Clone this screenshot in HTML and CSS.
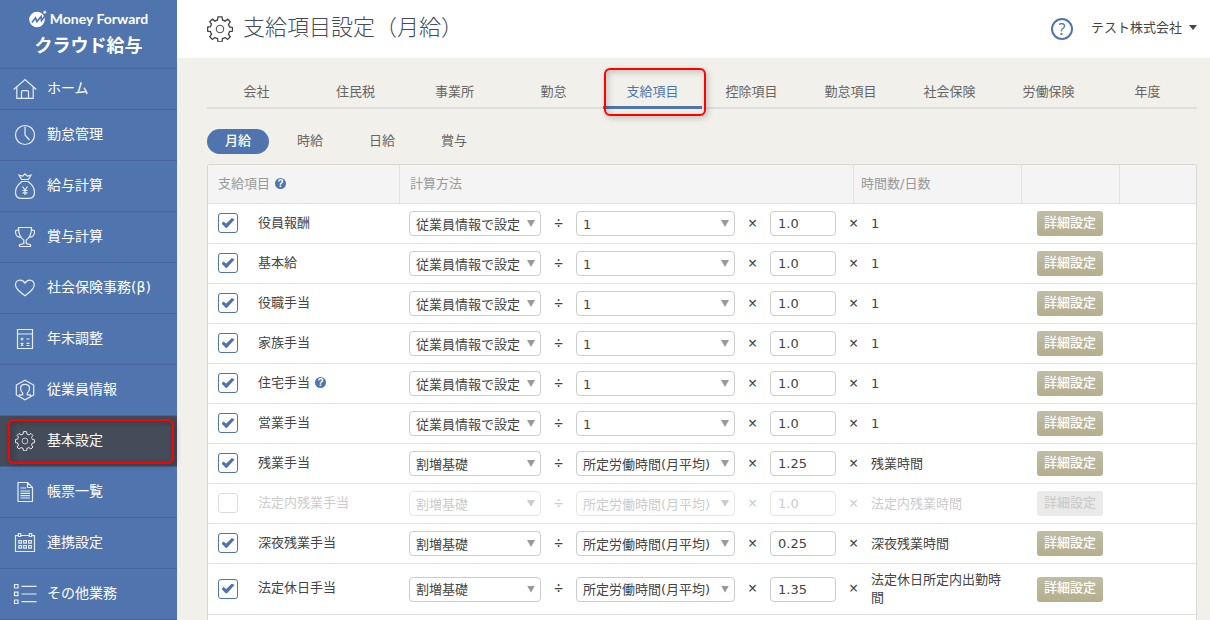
FILE: index.html
```html
<!DOCTYPE html>
<html lang="ja">
<head>
<meta charset="utf-8">
<meta name="viewport" content="width=device-width, initial-scale=1">
<title>支給項目設定（月給）</title>
<link rel="stylesheet" href="styles.css">
</head>
<body>
<svg class="defs" width="0" height="0" aria-hidden="true">
  <symbol id="gear" viewBox="0 0 26 26">
    <path d="M10.500 4 11 .8h4l.5 3.200q1.500.4 2.600 1.100l2.600-1.900 2.600 2.600-1.900 2.600q.8 1.200 1.100 2.600l3 .5v3.600l-3 .5q-.3 1.400-1.100 2.700l1.900 2.500-2.600 2.600-2.600-1.900q-1.100.7-2.600 1.100l-.5 3.200h-4l-.5-3.200q-1.500-.4-2.600-1.100l-2.600 1.900-2.600-2.600 1.900-2.600Q3.800 17 3.500 15.600l-2.900-.5v-4l2.900-.5q.3-1.400 1.100-2.600L2.700 5.800l2.600-2.600 2.600 1.900Q9 4.400 10.500 4z" fill="none" stroke="currentColor" stroke-width="1.300"/>
    <circle cx="13" cy="13" r="3.800" fill="none" stroke="currentColor" stroke-width="1"/>
  </symbol>
</svg>
<div class="app">
  <nav class="sidebar">
    <a class="brand" href="#">
      <span class="brand-top">
        <svg class="brand-mark" viewBox="0 0 18 18"><circle cx="8" cy="9.500" r="7.800" fill="#fff"/><path d="M3 12.500 6.500 8l1.500 3.500L12 6.500l.5 4L17 4.500" fill="none" stroke="#5075ae" stroke-width="1.700"/><circle cx="15.700" cy="2.300" r="1.700" fill="#fff" stroke="#5075ae" stroke-width=".6"/></svg>
        <span>Money Forward</span>
      </span>
      <span class="brand-sub">クラウド給与</span>
    </a>
    <a class="nav-item nav-home" href="#"><svg class="nav-icon" viewBox="0 0 24 24"><path d="M.7 12.500 12 2.500l11.300 10M3.800 10v11.300h16.400V10M8.500 21v-6.300q0-1 1-1h5q1 0 1 1V21"/></svg><span>ホーム</span></a>
    <a class="nav-item" href="#"><svg class="nav-icon" viewBox="0 0 24 24"><circle cx="12" cy="12" r="9.500"/><path d="M12 3.500V12l4.500 5"/></svg><span>勤怠管理</span></a>
    <a class="nav-item" href="#"><svg class="nav-icon tall" viewBox="0 0 24 26"><path d="M8.700 6.500 6 2.200l3.700 1L12 .8l2.300 2.400L18 2.200l-2.700 4.300zM8.300 8.500h7.400M8.700 8.700C5 11.500 2.500 15 2.500 19c0 4.500 2 6.300 5 6.300h9c3 0 5-1.800 5-6.300 0-4-2.500-7.500-6.200-10.300M9.500 13.500l2.500 3.500 2.500-3.500M12 17v5M9.500 17.500h5M9.500 19.800h5"/></svg><span>給与計算</span></a>
    <a class="nav-item" href="#"><svg class="nav-icon" viewBox="0 0 24 24"><path d="M5.500 2.500h13c0 6-1.500 10-5.300 12.500v3.500l4.300 1.200v1.800h-11v-1.800l4.300-1.200V15C7 12.500 5.500 8.500 5.500 2.500zM5.600 5.200C3.500 4.700 2.500 5.500 2.500 7c0 3 2 5.200 5 5.200M18.400 5.200c2.100-.5 3.100.3 3.100 1.800 0 3-2 5.200-5 5.200"/></svg><span>賞与計算</span></a>
    <a class="nav-item" href="#"><svg class="nav-icon" viewBox="0 0 24 24"><path d="M12 7.200C10.500 4.800 8.800 4.200 7 4.200c-2.700 0-4.500 2-4.500 4.600 0 3 2 5.200 9.500 11 7.500-5.800 9.200-8 9.200-11 0-2.600-1.700-4.600-4.400-4.600-1.800 0-3.300.6-4.800 3z"/></svg><span>社会保険事務(β)</span></a>
    <a class="nav-item" href="#"><svg class="nav-icon" viewBox="0 0 24 24"><path d="M4.500 2.500h15v19h-15zM4.500 7h15M7.500 12h3M9 10.500v3M13.500 12h3M7.800 16l2.500 2.500M10.300 16l-2.500 2.500M13.500 16.300h3M13.500 18.500h3"/></svg><span>年末調整</span></a>
    <a class="nav-item" href="#"><svg class="nav-icon" viewBox="0 0 24 24"><path d="M12 2.300 20.700 7v10L12 21.700 3.300 17V7zM6.500 18.300v-1.500h3.200V15C8 13.500 7.500 12 7.500 10.300c0-2.500 2-4 4.500-4s4.500 1.500 4.500 4c0 1.700-.5 3.200-2.200 4.700v1.800h3.200v1.500"/></svg><span>従業員情報</span></a>
    <a class="nav-item active marked" href="#" aria-current="page"><svg class="nav-icon gear"><use href="#gear"/></svg><span>基本設定</span></a>
    <a class="nav-item" href="#"><svg class="nav-icon" viewBox="0 0 24 24"><path d="M5 2.500h9.500l5 5v14H5zM14.500 2.500v5h5M7.500 8H13M7.500 11h9.500M7.500 13.300h9.500M7.500 15.700h9.500M7.500 18h9.500"/></svg><span>帳票一覧</span></a>
    <a class="nav-item" href="#"><svg class="nav-icon" viewBox="0 0 24 24"><path d="M5 4.500H2.500v16h19v-16H19M8 4.500h8M5.300 2.500h2.400v3H5.300zM16.300 2.500h2.400v3h-2.400zM5.800 9.500h2.700v2.700H5.800zM10.700 9.500h2.700v2.700h-2.700zM15.600 9.500h2.700v2.700h-2.700zM5.800 14.500h2.700v2.700H5.800zM10.700 14.500h2.700v2.700h-2.700zM15.600 14.500h2.700v2.700h-2.700z"/></svg><span>連携設定</span></a>
    <a class="nav-item" href="#"><svg class="nav-icon" viewBox="0 0 24 24"><path d="M1.500 2.500h3.500v3.500H1.500zM1.500 10.200h3.500v3.500H1.500zM1.500 18h3.500v3.500H1.500zM8.500 4.300h15M8.500 12h15M8.500 19.700h15"/></svg><span>その他業務</span></a>
  </nav>

  <div class="page">
    <header class="topbar">
      <svg class="title-icon"><use href="#gear"/></svg>
      <h1>支給項目設定（月給）</h1>
      <a class="help" href="#" aria-label="ヘルプ">?</a>
      <button class="company" type="button">テスト株式会社<span class="caret"></span></button>
    </header>

    <main>
      <nav class="tabs">
        <a href="#">会社</a><a href="#">住民税</a><a href="#">事業所</a><a href="#">勤怠</a><a class="current marked" href="#" aria-current="page">支給項目</a><a href="#">控除項目</a><a href="#">勤怠項目</a><a href="#">社会保険</a><a href="#">労働保険</a><a href="#">年度</a>
      </nav>
      <nav class="pills">
        <a class="current" href="#">月給</a><a href="#">時給</a><a href="#">日給</a><a href="#">賞与</a>
      </nav>

      <div class="card">
        <table>
          <colgroup><col class="c-item"><col class="c-method"><col class="c-hours"><col class="c-detail"><col class="c-rest"></colgroup>
          <thead>
            <tr><th>支給項目<span class="tip">?</span></th><th>計算方法</th><th>時間数/日数</th><th></th><th></th></tr>
          </thead>
          <tbody>
            <tr>
              <td><label class="item"><input type="checkbox" checked><span>役員報酬</span></label></td>
              <td colspan="2"><div class="formula"><span class="pick base"><select aria-label="基礎"><option>従業員情報で設定</option></select></span><span class="op">÷</span><span class="pick divisor"><select aria-label="除数"><option>1</option></select></span><span class="op">×</span><input class="rate" type="text" value="1.0" aria-label="倍率"><span class="op">×</span><span class="hours">1</span></div></td>
              <td class="detail"><button type="button">詳細設定</button></td><td></td>
            </tr>
            <tr>
              <td><label class="item"><input type="checkbox" checked><span>基本給</span></label></td>
              <td colspan="2"><div class="formula"><span class="pick base"><select aria-label="基礎"><option>従業員情報で設定</option></select></span><span class="op">÷</span><span class="pick divisor"><select aria-label="除数"><option>1</option></select></span><span class="op">×</span><input class="rate" type="text" value="1.0" aria-label="倍率"><span class="op">×</span><span class="hours">1</span></div></td>
              <td class="detail"><button type="button">詳細設定</button></td><td></td>
            </tr>
            <tr>
              <td><label class="item"><input type="checkbox" checked><span>役職手当</span></label></td>
              <td colspan="2"><div class="formula"><span class="pick base"><select aria-label="基礎"><option>従業員情報で設定</option></select></span><span class="op">÷</span><span class="pick divisor"><select aria-label="除数"><option>1</option></select></span><span class="op">×</span><input class="rate" type="text" value="1.0" aria-label="倍率"><span class="op">×</span><span class="hours">1</span></div></td>
              <td class="detail"><button type="button">詳細設定</button></td><td></td>
            </tr>
            <tr>
              <td><label class="item"><input type="checkbox" checked><span>家族手当</span></label></td>
              <td colspan="2"><div class="formula"><span class="pick base"><select aria-label="基礎"><option>従業員情報で設定</option></select></span><span class="op">÷</span><span class="pick divisor"><select aria-label="除数"><option>1</option></select></span><span class="op">×</span><input class="rate" type="text" value="1.0" aria-label="倍率"><span class="op">×</span><span class="hours">1</span></div></td>
              <td class="detail"><button type="button">詳細設定</button></td><td></td>
            </tr>
            <tr>
              <td><label class="item"><input type="checkbox" checked><span>住宅手当<span class="tip">?</span></span></label></td>
              <td colspan="2"><div class="formula"><span class="pick base"><select aria-label="基礎"><option>従業員情報で設定</option></select></span><span class="op">÷</span><span class="pick divisor"><select aria-label="除数"><option>1</option></select></span><span class="op">×</span><input class="rate" type="text" value="1.0" aria-label="倍率"><span class="op">×</span><span class="hours">1</span></div></td>
              <td class="detail"><button type="button">詳細設定</button></td><td></td>
            </tr>
            <tr>
              <td><label class="item"><input type="checkbox" checked><span>営業手当</span></label></td>
              <td colspan="2"><div class="formula"><span class="pick base"><select aria-label="基礎"><option>従業員情報で設定</option></select></span><span class="op">÷</span><span class="pick divisor"><select aria-label="除数"><option>1</option></select></span><span class="op">×</span><input class="rate" type="text" value="1.0" aria-label="倍率"><span class="op">×</span><span class="hours">1</span></div></td>
              <td class="detail"><button type="button">詳細設定</button></td><td></td>
            </tr>
            <tr>
              <td><label class="item"><input type="checkbox" checked><span>残業手当</span></label></td>
              <td colspan="2"><div class="formula"><span class="pick base"><select aria-label="基礎"><option>割増基礎</option></select></span><span class="op">÷</span><span class="pick divisor"><select aria-label="除数"><option>所定労働時間(月平均)</option></select></span><span class="op">×</span><input class="rate" type="text" value="1.25" aria-label="倍率"><span class="op">×</span><span class="hours">残業時間</span></div></td>
              <td class="detail"><button type="button">詳細設定</button></td><td></td>
            </tr>
            <tr class="off">
              <td><label class="item"><input type="checkbox"><span>法定内残業手当</span></label></td>
              <td colspan="2"><div class="formula"><span class="pick base"><select aria-label="基礎" disabled><option>割増基礎</option></select></span><span class="op">÷</span><span class="pick divisor"><select aria-label="除数" disabled><option>所定労働時間(月平均)</option></select></span><span class="op">×</span><input class="rate" type="text" value="1.0" aria-label="倍率" disabled><span class="op">×</span><span class="hours">法定内残業時間</span></div></td>
              <td class="detail"><button type="button" disabled>詳細設定</button></td><td></td>
            </tr>
            <tr>
              <td><label class="item"><input type="checkbox" checked><span>深夜残業手当</span></label></td>
              <td colspan="2"><div class="formula"><span class="pick base"><select aria-label="基礎"><option>割増基礎</option></select></span><span class="op">÷</span><span class="pick divisor"><select aria-label="除数"><option>所定労働時間(月平均)</option></select></span><span class="op">×</span><input class="rate" type="text" value="0.25" aria-label="倍率"><span class="op">×</span><span class="hours">深夜残業時間</span></div></td>
              <td class="detail"><button type="button">詳細設定</button></td><td></td>
            </tr>
            <tr>
              <td><label class="item"><input type="checkbox" checked><span>法定休日手当</span></label></td>
              <td colspan="2"><div class="formula"><span class="pick base"><select aria-label="基礎"><option>割増基礎</option></select></span><span class="op">÷</span><span class="pick divisor"><select aria-label="除数"><option>所定労働時間(月平均)</option></select></span><span class="op">×</span><input class="rate" type="text" value="1.35" aria-label="倍率"><span class="op">×</span><span class="hours">法定休日所定内出勤時間</span></div></td>
              <td class="detail"><button type="button">詳細設定</button></td><td></td>
            </tr>
          </tbody>
        </table>
      </div>
    </main>
  </div>
</div>
</body>
</html>
```

FILE: styles.css
```css
* { box-sizing: border-box; }

body {
  margin: 0;
  background: #f1f0eb;
  color: #444;
  font: 13px/18px "DejaVu Sans", "Noto Sans CJK JP", sans-serif;
}

a { color: inherit; text-decoration: none; }
button, input, select { margin: 0; font: inherit; color: inherit; }
.defs { position: absolute; }

.app { display: flex; min-height: 100vh; }

/* Sidebar */
.sidebar {
  flex: none;
  width: 177px;
  background: #5075ae;
  color: #fff;
  font-size: 14px;
}
.brand {
  display: flex;
  flex-direction: column;
  align-items: center;
  height: 69px;
  padding-top: 9px;
  border-bottom: 1px solid #45669f;
}
.brand-top {
  display: flex;
  align-items: center;
  gap: 3px;
  font: bold 14px/20px Lato, sans-serif;
}
.brand-mark { width: 18px; height: 18px; }
.brand-sub {
  font: bold 18px/30px "Noto Sans CJK JP", sans-serif;
}
.nav-item {
  position: relative;
  display: flex;
  align-items: center;
  gap: 10px;
  height: 51px;
  padding-left: 13px;
  border-bottom: 1px solid #45669f;
}
.nav-item span { padding-bottom: 2px; }
.nav-home { height: 41px; }
.nav-icon {
  flex: none;
  width: 24px;
  height: 24px;
  fill: none;
  stroke: #e8edf5;
  stroke-width: 1.2;
}
.nav-icon.tall { height: 26px; }
.nav-icon.gear { width: 20px; height: 20px; margin: 0 2px; color: #e8edf5; }
.nav-item.active { background: #444b59; border-color: #45608c; }

/* Highlight frames laid over the active entries */
.marked::after {
  content: "";
  position: absolute;
  z-index: 1;
  border: 2px solid #f00;
  border-radius: 6px;
  box-shadow: 2px 2px 6px rgba(0, 0, 0, .2), inset 2px 2px 6px rgba(0, 0, 0, .2);
  pointer-events: none;
}
.nav-item.marked::after { inset: 3px 3px 2px 8px; }
.tabs .marked::after { inset: -6px -4px -10px 1px; }

/* Header */
.page { flex: 1; min-width: 0; display: flex; flex-direction: column; }
.topbar {
  display: flex;
  align-items: center;
  height: 58px;
  padding: 0 13px 0 30px;
  background: #fff;
}
.title-icon { width: 26px; height: 26px; color: #444; }
h1 {
  flex: 1;
  margin: 0 0 0 10px;
  padding-bottom: 2px;
  color: #444b59;
  font-size: 22px;
  font-weight: 300;
  line-height: 32px;
}
.help {
  width: 22px;
  height: 22px;
  border: 2px solid #5075ae;
  border-radius: 50%;
  color: #5075ae;
  font: 16px/18px "Noto Sans", sans-serif;
  text-align: center;
}
.company {
  display: flex;
  align-items: center;
  gap: 7px;
  margin-left: 18px;
  padding: 0 0 3px;
  border: 0;
  background: none;
}
.caret {
  width: 8px;
  height: 5px;
  background: #444;
  clip-path: polygon(0 0, 100% 0, 50% 100%);
}

main {
  flex: 1;
  display: flex;
  flex-direction: column;
  padding: 16px 13px 0 30px;
}

/* Tabs */
.tabs { display: flex; border-bottom: 2px solid #ddd; }
.tabs a {
  position: relative;
  flex: 1;
  height: 35px;
  margin-bottom: -2px;
  padding-top: 9px;
  color: #666;
  text-align: center;
}
.tabs .current { border-bottom: 3px solid #5075ae; color: #5075ae; }

.pills { display: flex; gap: 10px; padding: 20px 0 10px; }
.pills a {
  padding: 3px 18px 4px;
  border-radius: 13px;
  color: #666;
}
.pills .current { background: #5075ae; color: #fff; font-weight: 500; }

/* Table */
.card {
  flex: 1;
  border: 1px solid #d8d8d8;
  border-bottom: 0;
  border-radius: 3px 3px 0 0;
  background: #fff;
}
table { width: 100%; table-layout: fixed; border-collapse: separate; border-spacing: 0; }
.c-item { width: 191px; }
.c-hours { width: 168px; }
.c-detail { width: 98px; }
.c-rest { width: 77px; }
th {
  height: 39px;
  padding: 0 10px;
  border-bottom: 1px solid #e2e2e2;
  border-left: 1px solid #e2e2e2;
  background: #f4f4f4;
  color: #999;
  font-weight: 400;
  text-align: left;
}
th:first-child { border-left: 0; }
th:nth-child(3) { padding-left: 7px; }
td { padding: 7px 10px; border-bottom: 1px solid #e2e2e2; }
td.detail { padding: 7px 0 7px 16px; }

.tip {
  display: inline-block;
  width: 11px;
  height: 11px;
  margin-left: 5px;
  border-radius: 50%;
  background: #5075ae;
  color: #fff;
  font: bold 10px/11px "Liberation Sans", sans-serif;
  text-align: center;
  vertical-align: 1px;
}

.item { display: flex; align-items: center; gap: 20px; padding-bottom: 1px; }
.item > span { padding-bottom: 1px; white-space: nowrap; }
.item input {
  appearance: none;
  display: grid;
  place-items: center;
  flex: none;
  width: 20px;
  height: 20px;
  border: 1px solid #5075ae;
  border-radius: 3px;
  background: #fff;
}
.item input:checked::before {
  content: "";
  width: 13px;
  height: 10px;
  background: #5075ae;
  clip-path: polygon(0 54%, 15% 36%, 36% 55%, 80% 0, 100% 14%, 45% 94%, 34% 100%);
}

.formula { display: flex; align-items: center; }
.pick { position: relative; flex: none; display: grid; }
.pick::after {
  content: "";
  position: absolute;
  top: 9px;
  right: 6px;
  width: 8px;
  height: 7px;
  background: #999;
  clip-path: polygon(0 0, 100% 0, 50% 100%);
  pointer-events: none;
}
.base { width: 132px; }
.divisor { width: 159px; }
select, .rate {
  appearance: none;
  height: 25px;
  border: 1px solid #ccc;
  border-radius: 4px;
  background: #fff;
}
select { width: 100%; padding: 2px 0 0 6px; }
.rate { flex: none; width: 66px; padding: 0 7px; }
.op {
  flex: none;
  width: 35px;
  padding-bottom: 2px;
  font: 16px/18px "Noto Sans", sans-serif;
  text-align: center;
}

.detail button {
  width: 66px;
  height: 25px;
  padding: 0 0 2px;
  border: 0;
  border-radius: 3px;
  background: linear-gradient(#c0bda5, #b5ae8e);
  color: #fff;
  font-weight: 500;
}

.off, .off select, .off .rate { color: #ccc; opacity: 1; }
.off .item input, .off select, .off .rate { border-color: #e6e6e6; }
.off .item input { border-color: #ddd; }
.off .pick::after { background: #ccc; }
.off .detail button { background: #eaeaea; color: #ccc; }
```
